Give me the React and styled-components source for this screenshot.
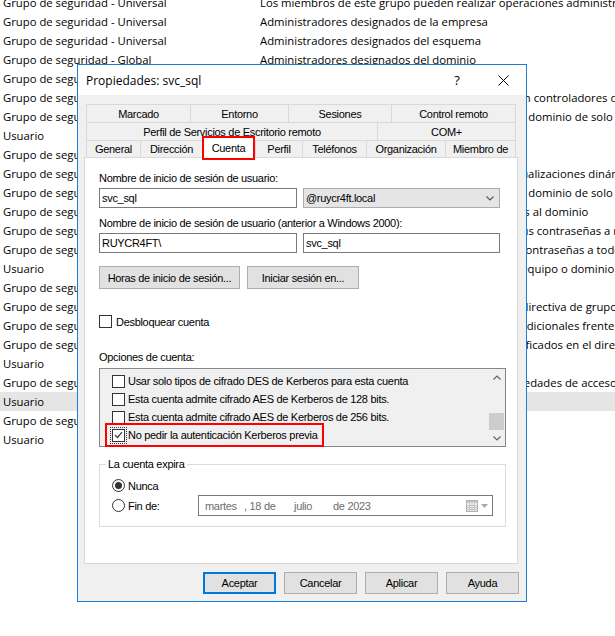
import React from "react";
import styled, { createGlobalStyle } from "styled-components";

const GlobalStyle = createGlobalStyle`
  html, body { margin: 0; padding: 0; background: #ffffff; }
  body { overflow: hidden; }
`;

const Screen = styled.div`
  position: relative;
  width: 615px;
  height: 636px;
  overflow: hidden;
  background: #ffffff;
`;

/* ---------- background list view ---------- */
const ListView = styled.div`
  display: flex;
  flex-direction: column;
  margin-top: -7px;
  font-family: "Open Sans", "Noto Sans", sans-serif;
  font-size: 11.3px;
  color: #000;
`;

const ListRow = styled.div`
  display: grid;
  grid-template-columns: 257px 1fr;
  align-items: center;
  height: 19px;
  padding-left: 3px;
  white-space: nowrap;
  background: ${(p) => (p.$selected ? "#e5e5e5" : "transparent")};
`;

const Cell = styled.span`
  overflow: hidden;
`;

/* ---------- dialog window ---------- */
const Dialog = styled.div`
  position: absolute;
  left: 77px;
  top: 64px;
  width: 450px;
  height: 538px;
  box-sizing: border-box;
  border: 1px solid #1a7fd4;
  background: #f0f0f0;
  display: flex;
  flex-direction: column;
  font-family: "Liberation Sans", Arial, sans-serif;
  font-size: 11px;
  letter-spacing: -0.3px;
  color: #000;
`;

const TitleBar = styled.div`
  display: flex;
  align-items: center;
  flex: 0 0 30px;
  background: #ffffff;
  padding-left: 8px;
`;

const Title = styled.div`
  flex: 1;
  font-family: "Open Sans", "Noto Sans", sans-serif;
  font-size: 12px;
  letter-spacing: 0;
`;

const CaptionButton = styled.div`
  width: 46px;
  height: 30px;
  display: flex;
  align-items: center;
  justify-content: center;
  font-family: "Open Sans", "Noto Sans", sans-serif;
  font-size: 13px;
  letter-spacing: 0;
`;

const Body = styled.div`
  flex: 1;
  display: flex;
  flex-direction: column;
  padding: 9px 8px 0 6px;
`;

const TabStrip = styled.div`
  display: flex;
  flex-direction: column;
  margin: 0 2px;
`;

const TabRow = styled.div`
  display: flex;
  height: ${(p) => p.$h}px;
`;

const Tab = styled.div`
  flex: 0 0 ${(p) => p.$w}px;
  box-sizing: border-box;
  display: flex;
  align-items: center;
  justify-content: center;
  border-top: 1px solid #d9d9d9;
  border-left: 1px solid #d9d9d9;
  background: #f0f0f0;
  white-space: nowrap;
  overflow: hidden;
  &:last-child {
    border-right: 1px solid #d9d9d9;
  }
`;

const ActiveTab = styled(Tab)`
  align-self: flex-start;
  height: 24px;
  margin-top: -4px;
  border: 2px solid #ff0000;
  background: #ffffff;
  position: relative;
  z-index: 1;
  &:last-child {
    border-right: 2px solid #ff0000;
  }
`;

const Panel = styled.div`
  box-sizing: border-box;
  flex: 0 0 407px;
  border: 1px solid #d9d9d9;
  background: #ffffff;
  padding-left: 14px;
  display: flex;
  flex-direction: column;
`;

const Label = styled.div`
  line-height: 13px;
  margin-top: ${(p) => p.$mt}px;
  white-space: nowrap;
`;

const FieldRow = styled.div`
  display: flex;
  gap: ${(p) => p.$gap ?? 6}px;
  margin-top: ${(p) => p.$mt}px;
`;

const TextBox = styled.div`
  box-sizing: border-box;
  width: ${(p) => p.$w}px;
  height: 20px;
  border: 1px solid #7a7a7a;
  background: #ffffff;
  display: flex;
  align-items: center;
  padding-left: 2px;
`;

const ComboBox = styled.div`
  box-sizing: border-box;
  width: 197px;
  height: 20px;
  border: 1px solid #acacac;
  background: #e5e5e5;
  display: flex;
  align-items: center;
  justify-content: space-between;
  padding: 0 5px 0 2px;
`;

const Button = styled.div`
  box-sizing: border-box;
  width: ${(p) => p.$w}px;
  height: ${(p) => p.$h}px;
  display: flex;
  align-items: center;
  justify-content: center;
  background: #e1e1e1;
  border: ${(p) => (p.$default ? "2px solid #0078d7" : "1px solid #adadad")};
  white-space: nowrap;
`;

const CheckRow = styled.div`
  display: flex;
  align-items: center;
  gap: ${(p) => p.$gap}px;
  margin-top: ${(p) => p.$mt ?? 0}px;
  height: 13px;
`;

const CheckBox = styled.span`
  box-sizing: border-box;
  width: 13px;
  height: 13px;
  flex: none;
  border: 1px solid #333333;
  background: #ffffff;
  display: inline-flex;
  align-items: center;
  justify-content: center;
  ${(p) => (p.$focus ? "outline: 1px dotted #333; outline-offset: 1px;" : "")}
`;

const ListBox = styled.div`
  box-sizing: border-box;
  width: 407px;
  height: 79px;
  margin-top: 4px;
  border: 1px solid #828790;
  background: #f0f0f0;
  display: flex;
`;

const ListItems = styled.div`
  flex: 1;
  padding-top: 3px;
  display: flex;
  flex-direction: column;
`;

const ListItem = styled.div`
  position: relative;
  height: 18px;
  display: flex;
  align-items: center;
  gap: 3px;
  padding-left: 12px;
  white-space: nowrap;
`;

const Annotation = styled.div`
  position: absolute;
  top: -3px;
  bottom: -3px;
  left: 5px;
  width: 219px;
  box-sizing: border-box;
  border: 2px solid #ff0000;
  pointer-events: none;
`;

const ScrollBar = styled.div`
  width: 17px;
  display: flex;
  flex-direction: column;
  background: #f0f0f0;
`;

const ScrollArrow = styled.div`
  height: ${(p) => p.$h}px;
  display: flex;
  align-items: center;
  justify-content: center;
`;

const ScrollTrack = styled.div`
  flex: 1;
  display: flex;
  flex-direction: column;
  justify-content: flex-end;
  padding: 0 1px;
`;

const ScrollThumb = styled.div`
  height: 17px;
  background: #cdcdcd;
`;

const GroupBox = styled.fieldset`
  box-sizing: border-box;
  width: 407px;
  min-width: 0;
  margin: 11px 0 0 0;
  padding: 0 0 10px 12px;
  border: 1px solid #dcdcdc;
`;

const Legend = styled.legend`
  padding: 0 2px;
  margin-left: -6px;
  line-height: 13px;
`;

const RadioRow = styled.div`
  display: grid;
  grid-template-columns: 13px 70px auto;
  column-gap: 3px;
  align-items: center;
  height: ${(p) => p.$h}px;
  margin-top: ${(p) => p.$mt}px;
`;

const Radio = styled.span`
  box-sizing: border-box;
  width: 13px;
  height: 13px;
  border-radius: 50%;
  border: 1px solid #333333;
  background: #ffffff;
  display: flex;
  align-items: center;
  justify-content: center;
  &::after {
    content: "";
    width: 7px;
    height: 7px;
    border-radius: 50%;
    background: ${(p) => (p.$checked ? "#333333" : "transparent")};
  }
`;

const DatePicker = styled.div`
  box-sizing: border-box;
  width: 295px;
  height: 21px;
  margin-left: -3px;
  border: 1px solid #7a7a7a;
  background: #ffffff;
  display: flex;
  align-items: center;
  padding: 0 4px 0 6px;
  color: #6d6d6d;
`;

const DatePart = styled.span`
  flex: 0 0 ${(p) => p.$w}px;
  white-space: nowrap;
`;

const DateIcons = styled.span`
  margin-left: auto;
  display: flex;
  align-items: center;
  gap: 3px;
`;

const ButtonRow = styled.div`
  display: flex;
  justify-content: flex-end;
  gap: 8px;
  margin: 8px -1px 0 0;
`;

/* ---------- icons ---------- */
const Chevron = ({ up, color = "#606060" }) => (
  <svg width="8" height="5" viewBox="0 0 8 5">
    <path
      d={up ? "M0.5 4.5 L4 1 L7.5 4.5" : "M0.5 0.5 L4 4 L7.5 0.5"}
      fill="none"
      stroke={color}
      strokeWidth="1.1"
    />
  </svg>
);

const Check = () => (
  <svg width="9" height="8" viewBox="0 0 9 8">
    <path d="M1 4 L3.5 6.5 L8 1.2" fill="none" stroke="#444" strokeWidth="1.3" />
  </svg>
);

const CloseIcon = () => (
  <svg width="11" height="11" viewBox="0 0 11 11">
    <path d="M0.5 0.5 L10.5 10.5 M10.5 0.5 L0.5 10.5" stroke="#000" strokeWidth="1" />
  </svg>
);

const CalendarIcon = () => (
  <svg width="12" height="12" viewBox="0 0 12 12">
    <rect x="0.5" y="0.5" width="11" height="11" fill="#f4f4f4" stroke="#b0b0b0" />
    <rect x="1" y="1" width="10" height="2" fill="#c8c8c8" />
    <path
      d="M1 5.5 H11 M1 7.5 H11 M1 9.5 H11 M3.5 3 V11 M6 3 V11 M8.5 3 V11"
      stroke="#c4c4c4"
      strokeWidth="1"
    />
  </svg>
);

const DropTriangle = () => (
  <svg width="7" height="4" viewBox="0 0 7 4">
    <path d="M0 0 H7 L3.5 4 Z" fill="#a8a8a8" />
  </svg>
);

/* ---------- data ---------- */
const rows = [
  ["Grupo de seguridad - Universal", "Los miembros de este grupo pueden realizar operaciones administrativas en objetos de clave dentro del bosque."],
  ["Grupo de seguridad - Universal", "Administradores designados de la empresa"],
  ["Grupo de seguridad - Universal", "Administradores designados del esquema"],
  ["Grupo de seguridad - Global", "Administradores designados del dominio"],
  ["Grupo de seguridad - Global", "Todos los usuarios del dominio"],
  ["Grupo de seguridad - Universal", "Los miembros de este grupo de la organización son controladores de dominio de solo lectura"],
  ["Grupo de seguridad - Global", "Los miembros de este grupo son controladores de dominio de solo lectura en el dominio"],
  ["Usuario", ""],
  ["Grupo de seguridad - Global", ""],
  ["Grupo de seguridad - Global", "Clientes DNS que tienen permiso para realizar actualizaciones dinámicas en nombre de otros clientes"],
  ["Grupo de seguridad - Global", "Los miembros de este grupo son controladores de dominio de solo lectura"],
  ["Grupo de seguridad - Global", "Todas las estaciones de trabajo y servidores unidos al dominio"],
  ["Grupo de seguridad - Local de dominio", "Los miembros de este grupo no pueden replicar sus contraseñas a ningún controlador"],
  ["Grupo de seguridad - Local de dominio", "Los miembros de este grupo pueden replicar sus contraseñas a todos los controladores"],
  ["Usuario", "Cuenta integrada para el acceso como invitado al equipo o dominio"],
  ["Grupo de seguridad - Global", ""],
  ["Grupo de seguridad - Global", "Los miembros de este grupo pueden modificar la directiva de grupo del dominio"],
  ["Grupo de seguridad - Global", "Los miembros de este grupo tienen protecciones adicionales frente a amenazas"],
  ["Grupo de seguridad - Local de dominio", "Los miembros de este grupo pueden publicar certificados en el directorio"],
  ["Usuario", ""],
  ["Grupo de seguridad - Local de dominio", "Servidores de este grupo tienen acceso a las propiedades de acceso remoto de los usuarios"],
  ["Usuario", "", true],
  ["Grupo de seguridad - Global", ""],
  ["Usuario", ""],
];

const tabRows = [
  { h: 18, tabs: [["Marcado", 104], ["Entorno", 98], ["Sesiones", 103], ["Control remoto", 125]] },
  { h: 18, tabs: [["Perfil de Servicios de Escritorio remoto", 291], ["COM+", 139]] },
  {
    h: 17,
    tabs: [
      ["General", 54],
      ["Dirección", 62],
      ["Cuenta", 53, true],
      ["Perfil", 47],
      ["Teléfonos", 64],
      ["Organización", 79],
      ["Miembro de", 71],
    ],
  },
];

const options = [
  ["Usar solo tipos de cifrado DES de Kerberos para esta cuenta", false],
  ["Esta cuenta admite cifrado AES de Kerberos de 128 bits.", false],
  ["Esta cuenta admite cifrado AES de Kerberos de 256 bits.", false],
  ["No pedir la autenticación Kerberos previa", true],
];

export default function App() {
  return (
    <>
      <GlobalStyle />
      <Screen>
        <ListView>
          {rows.map(([type, desc, sel], i) => (
            <ListRow key={i} $selected={sel}>
              <Cell>{type}</Cell>
              <Cell>{desc}</Cell>
            </ListRow>
          ))}
        </ListView>

        <Dialog>
          <TitleBar>
            <Title>Propiedades: svc_sql</Title>
            <CaptionButton>?</CaptionButton>
            <CaptionButton>
              <CloseIcon />
            </CaptionButton>
          </TitleBar>

          <Body>
            <TabStrip>
              {tabRows.map((r, ri) => (
                <TabRow key={ri} $h={r.h}>
                  {r.tabs.map(([label, w, active]) =>
                    active ? (
                      <ActiveTab key={label} $w={w}>
                        {label}
                      </ActiveTab>
                    ) : (
                      <Tab key={label} $w={w}>
                        {label}
                      </Tab>
                    )
                  )}
                </TabRow>
              ))}
            </TabStrip>

            <Panel>
              <Label $mt={14}>Nombre de inicio de sesión de usuario:</Label>
              <FieldRow $mt={3}>
                <TextBox $w={198}>svc_sql</TextBox>
                <ComboBox>
                  <span>@ruycr4ft.local</span>
                  <Chevron color="#555" />
                </ComboBox>
              </FieldRow>

              <Label $mt={9}>Nombre de inicio de sesión de usuario (anterior a Windows 2000):</Label>
              <FieldRow $mt={3}>
                <TextBox $w={198}>RUYCR4FT\</TextBox>
                <TextBox $w={197}>svc_sql</TextBox>
              </FieldRow>

              <FieldRow $mt={13} $gap={7}>
                <Button $w={141} $h={23}>Horas de inicio de sesión...</Button>
                <Button $w={112} $h={23}>Iniciar sesión en...</Button>
              </FieldRow>

              <CheckRow $mt={26} $gap={4}>
                <CheckBox />
                <span>Desbloquear cuenta</span>
              </CheckRow>

              <Label $mt={23}>Opciones de cuenta:</Label>
              <ListBox>
                <ListItems>
                  {options.map(([text, checked], i) => (
                    <ListItem key={i}>
                      <CheckBox $focus={checked}>{checked && <Check />}</CheckBox>
                      <span>{text}</span>
                      {checked && <Annotation />}
                    </ListItem>
                  ))}
                </ListItems>
                <ScrollBar>
                  <ScrollArrow $h={17}>
                    <Chevron up />
                  </ScrollArrow>
                  <ScrollTrack>
                    <ScrollThumb />
                  </ScrollTrack>
                  <ScrollArrow $h={16}>
                    <Chevron />
                  </ScrollArrow>
                </ScrollBar>
              </ListBox>

              <GroupBox>
                <Legend>La cuenta expira</Legend>
                <RadioRow $h={13} $mt={8}>
                  <Radio $checked />
                  <span>Nunca</span>
                </RadioRow>
                <RadioRow $h={21} $mt={3}>
                  <Radio />
                  <span>Fin de:</span>
                  <DatePicker>
                    <DatePart $w={39}>martes</DatePart>
                    <DatePart $w={50}>, 18 de</DatePart>
                    <DatePart $w={39}>julio</DatePart>
                    <DatePart $w={60}>de 2023</DatePart>
                    <DateIcons>
                      <CalendarIcon />
                      <DropTriangle />
                    </DateIcons>
                  </DatePicker>
                </RadioRow>
              </GroupBox>
            </Panel>

            <ButtonRow>
              <Button $w={73} $h={22} $default>Aceptar</Button>
              <Button $w={73} $h={22}>Cancelar</Button>
              <Button $w={73} $h={22}>Aplicar</Button>
              <Button $w={73} $h={22}>Ayuda</Button>
            </ButtonRow>
          </Body>
        </Dialog>
      </Screen>
    </>
  );
}
